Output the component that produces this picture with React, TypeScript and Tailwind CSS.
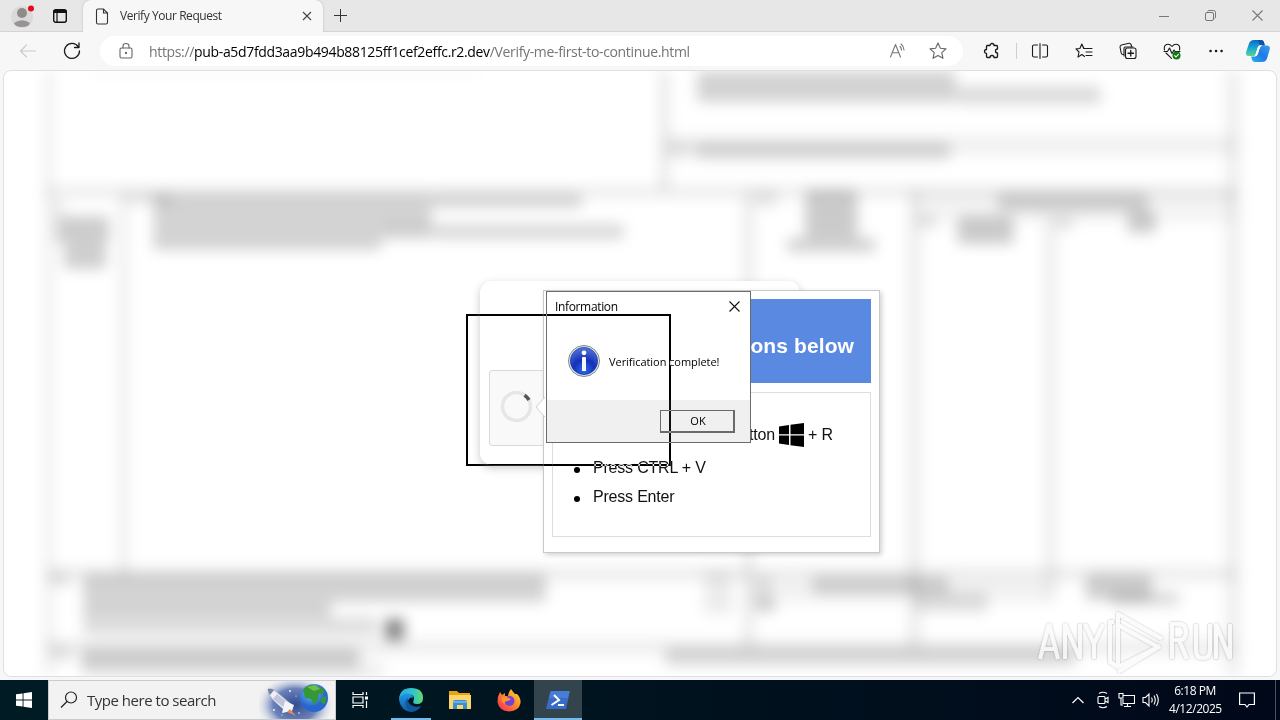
import React from "react";

type Box = [number, number, number, number, number];

const rules: Box[] = [
  [46, 60, 8, 620, 0.07],
  [660, 60, 9, 130, 0.1],
  [46, 186, 1190, 12, 0.07],
  [665, 136, 570, 18, 0.06],
  [121, 190, 7, 385, 0.09],
  [743, 190, 11, 460, 0.08],
  [908, 190, 12, 460, 0.08],
  [1044, 215, 12, 385, 0.07],
  [1226, 60, 12, 620, 0.08],
  [915, 190, 320, 32, 0.045],
  [46, 567, 1190, 14, 0.07],
  [748, 580, 300, 22, 0.05],
  [46, 640, 1190, 14, 0.07],
];

const inkBlots: Box[] = [
  [90, 64, 390, 9, 0.09],
  [697, 70, 258, 32, 0.21],
  [955, 86, 145, 18, 0.17],
  [695, 142, 255, 17, 0.18],
  [668, 140, 22, 18, 0.1],
  [128, 193, 45, 11, 0.12],
  [154, 194, 278, 32, 0.21],
  [432, 194, 150, 14, 0.19],
  [154, 226, 228, 24, 0.21],
  [382, 224, 50, 15, 0.21],
  [432, 224, 192, 15, 0.18],
  [52, 200, 14, 16, 0.08],
  [57, 216, 53, 27, 0.24],
  [65, 243, 42, 26, 0.23],
  [755, 190, 22, 17, 0.11],
  [805, 190, 52, 48, 0.25],
  [787, 238, 88, 14, 0.22],
  [997, 193, 150, 18, 0.2],
  [918, 214, 18, 15, 0.12],
  [957, 216, 56, 28, 0.25],
  [1055, 216, 18, 13, 0.14],
  [1127, 211, 28, 22, 0.24],
  [52, 572, 18, 14, 0.12],
  [84, 574, 462, 28, 0.21],
  [84, 602, 248, 15, 0.21],
  [84, 617, 294, 18, 0.16],
  [52, 646, 20, 15, 0.12],
  [82, 648, 278, 20, 0.22],
  [82, 664, 302, 12, 0.1],
  [704, 570, 28, 44, 0.09],
  [757, 575, 14, 22, 0.12],
  [755, 597, 20, 15, 0.22],
  [812, 576, 136, 18, 0.19],
  [915, 592, 72, 20, 0.15],
  [1085, 574, 66, 26, 0.23],
  [1110, 592, 68, 13, 0.18],
  [665, 648, 410, 17, 0.19],
];

function BlurredForm() {
  return (
    <svg className="block h-full w-full blur-[7px]" viewBox="5 71 1270 605" preserveAspectRatio="none">
      {rules.map(([x, y, w, h, o], i) => (
        <rect key={i} x={x} y={y} width={w} height={h} fill="#000" opacity={o} />
      ))}
      {inkBlots.map(([x, y, w, h, o], i) => (
        <rect key={i} x={x} y={y} width={w} height={h} rx="4" fill="#000" opacity={o * 0.82} />
      ))}
      <rect x="386" y="619" width="18" height="21" fill="#000" opacity="0.5" />
    </svg>
  );
}

function Ico({ children, w = 20, className = "" }: { children: React.ReactNode; w?: number; className?: string }) {
  return (
    <svg width={w} height={w} viewBox="0 0 20 20" fill="none" stroke="currentColor" strokeWidth="1.1" strokeLinejoin="round" strokeLinecap="round" className={"block shrink-0 " + className}>
      {children}
    </svg>
  );
}

function TabStrip() {
  return (
    <div className="flex h-8 items-stretch border-b border-[#d4d4d4] bg-[#e7e7e7]">
      <div className="flex w-[83px] items-center pl-2.5">
        <svg width="26" height="26" viewBox="0 0 26 26" className="block">
          <circle cx="12" cy="14" r="11" fill="#dadada" />
          <circle cx="12" cy="10" r="5" fill="#8e8b89" />
          <path d="M4 20 Q12 14.500 20 20 Q19 24 12 24 Q5 24 4 20Z" fill="#979493" />
          <circle cx="21" cy="5.500" r="3" fill="#e00b1c" />
        </svg>
        <svg width="16" height="16" viewBox="0 0 16 16" fill="none" stroke="#111" className="ml-4 block">
          <rect x="1.700" y="1.700" width="12.600" height="12.600" rx="2" strokeWidth="1.400" />
          <path d="M1.700 3.500H14.300" strokeWidth="3" />
          <path d="M5 4V14" strokeWidth="1.200" />
        </svg>
      </div>
      <div className="-mb-px flex w-60 items-center rounded-t-lg bg-[#f7f7f7] pl-3 shadow-[0_0_2px_rgba(0,0,0,0.25)] [clip-path:inset(-3px_-3px_0_-3px)]">
        <svg width="14" height="17" viewBox="0 0 14 17" fill="none" stroke="#333" strokeWidth="1.100" className="block">
          <path d="M3 1H8.500L12.500 5V14.500Q12.500 16 11 16H3Q1.500 16 1.500 14.500V2.500Q1.500 1 3 1Z" />
          <path d="M8.500 1V5H12.500" />
        </svg>
        <span className="ml-[11px] w-[182px] whitespace-nowrap text-[12px] tracking-[-0.43px] text-[#333]">Verify Your Request</span>
        <svg width="10" height="10" viewBox="0 0 10 10" stroke="#444" strokeWidth="1.100" className="block"><path d="M1 1L9 9M9 1L1 9" /></svg>
      </div>
      <div className="flex flex-1 items-center pl-[11px]">
        <svg width="14" height="14" viewBox="0 0 14 14" stroke="#333" className="block"><path d="M6.500 0V13M0 6.500H13" /></svg>
      </div>
      <div className="flex items-center gap-[36px] pr-[17px] text-[#777]">
        <svg width="10" height="10" viewBox="0 0 10 10" stroke="currentColor" className="block"><path d="M0 5.500H10" /></svg>
        <svg width="11" height="11" viewBox="0 0 11 11" fill="none" stroke="currentColor" className="block"><rect x=".5" y="2.500" width="8" height="8" rx="1.500" /><path d="M2.500 1.500Q3 .5 4 .5H8.500Q10.500 .5 10.500 2.500V7Q10.500 8 9.500 8.500" /></svg>
        <svg width="11" height="11" viewBox="0 0 11 11" stroke="currentColor" strokeWidth="1.100" className="block"><path d="M.5 .5L10.500 10.500M10.500 .5L.5 10.500" /></svg>
      </div>
    </div>
  );
}

function Copilot() {
  return (
    <svg width="26" height="24" viewBox="0 0 26 24" className="block">
      <defs>
        <linearGradient id="cpA" x1="0" y1="0" x2="0" y2="1"><stop offset="0" stopColor="#0c6cc4" /><stop offset=".5" stopColor="#18a6d8" /><stop offset="1" stopColor="#59d68d" /></linearGradient>
        <linearGradient id="cpB" x1="1" y1="0" x2="0" y2="1"><stop offset="0" stopColor="#3aa2ee" /><stop offset=".5" stopColor="#2277e6" /><stop offset="1" stopColor="#1fb4f0" /></linearGradient>
      </defs>
      <path d="M9 1H16Q18.500 1 19.200 4L19.800 6H16Q13.500 6 12.700 8.500L10.500 15.500Q9.800 17 8 17H4Q0 17 1.300 12.500L4 4.500Q5.200 1 9 1Z" fill="url(#cpA)" />
      <path d="M17 23H10Q7.500 23 6.800 20L6.200 17.500H9Q12 17.500 13 14.500L15 8.500Q15.700 6.500 17.500 6.500H21.500Q26 6.500 24.600 11L22 19.500Q20.800 23 17 23Z" fill="url(#cpB)" />
      <path d="M12.500 1H16Q18.500 1 19.200 4L19.800 6.500H17Q14.500 6.500 13.700 3.500Z" fill="#1251a4" />
      <path d="M15 6.500H17.500Q15.500 7 14.500 9.500L12.700 15Q11.800 17.500 9 17.500Q10.200 17 10.700 15.300L12.700 8.700Q13.300 6.600 15 6.500Z" fill="#fff" />
    </svg>
  );
}

function Toolbar() {
  return (
    <div className="flex h-[38px] items-center bg-[#f7f7f7] text-[#1a1a1a]">
      <div className="flex w-[100px] items-center pl-[18px]">
        <Ico className="text-[#c9c9c9]"><path d="M2.500 10H17.500M8.500 4L2.500 10L8.500 16" /></Ico>
        <Ico className="ml-6"><path d="M16.200 5.700A7.500 7.500 0 1 0 17.500 10M17 2V6.500H12.500" strokeWidth="1.300" /></Ico>
      </div>
      <div className="flex h-[30px] w-[863px] items-center rounded-full bg-white pl-4">
        <Ico className="text-[#666]"><rect x="4" y="7" width="12" height="10" rx="1.500" /><path d="M7 7V5Q7 2.500 10 2.500Q13 2.500 13 5V7" /><circle cx="10" cy="12" r=".6" fill="currentColor" /></Ico>
        <span className="ml-[13px] flex-1 whitespace-nowrap text-[14px] tracking-[-0.34px] text-[#757575]">
          https://<span className="text-black">pub-a5d7fdd3aa9b494b88125ff1cef2effc.r2.dev</span>/Verify-me-first-to-continue.html
        </span>
        <Ico className="text-[#777]"><path d="M2.500 16L7.500 3.500L12.500 16M4.200 11.700H10.800M12 5.500Q13.500 7 13.500 9M13 3Q16 5.500 16 9" /></Ico>
        <Ico className="ml-5 mr-[15px] text-[#666]"><path d="M10 2L12.400 7.300L18 7.900L13.800 11.700L15 17.300L10 14.400L5 17.300L6.200 11.700L2 7.900L7.600 7.300Z" /></Ico>
      </div>
      <div className="flex flex-1 items-center pl-[19px]">
        <Ico><path d="M5 4.500H8A2 2 0 1 1 12 4.500H14.500Q15.500 4.500 15.500 5.500V8A2 2 0 1 0 15.500 12V15.500Q15.500 16.500 14.500 16.500H12A2 2 0 0 0 8 16.500H5.500Q4.500 16.500 4.500 15.500V12.500A2 2 0 1 1 4.500 8.500V5.500Q4.500 4.500 5.500 4.500" strokeWidth="1.300" /></Ico>
        <div className="ml-3.5 h-4 w-px bg-[#cfcfcf]" />
        <Ico className="ml-[13px]"><path d="M7.500 4H4Q2.500 4 2.500 5.500V14.500Q2.500 16 4 16H7.500M12.500 4H16Q17.500 4 17.500 5.500V14.500Q17.500 16 16 16H12.500M10 2.500V17.500" /></Ico>
        <Ico className="ml-6"><path d="M11.500 7.500H9.700L7.800 3L5.900 7.500L2 7.900L5 11L4 16L8 13.500L10.500 15.500M12 7.500H18M12 11H18M12 14.500H18M7.800 3L10 7.500" /></Ico>
        <Ico className="ml-6"><path d="M5 13.500Q3.500 13.500 3.200 12L2 6Q2 4.500 3.500 4L11 2.300Q12.500 2.200 13 3.500L13.500 5M6 15V7.500Q6 6 7.500 6H15" /><rect x="7.500" y="7" width="10.500" height="10.500" rx="2" /><path d="M12.750 9.500V15M10 12.250H15.500" strokeWidth="1.300" /></Ico>
        <Ico className="ml-6"><path d="M2.500 9Q1.500 5 4.500 3.500Q7.500 2.500 10 5.500Q12.500 2.500 15.500 3.500Q18.500 5 17.500 9M4 12L9.500 17.300M2 10.500H5.500L7.500 7L10 12.500L12 9L13 10.500H18" /><circle cx="14.500" cy="14.500" r="4" fill="#107c10" stroke="none" /><path d="M12.700 14.700L14 16L16.400 13.300" stroke="#fff" /></Ico>
        <Ico className="ml-6"><path d="M4.500 10H4.600M10 10H10.100M15.500 10H15.600" strokeWidth="2.500" /></Ico>
        <div className="ml-[19px]"><Copilot /></div>
      </div>
    </div>
  );
}

function SpinnerCard() {
  return (
    <div className="absolute left-[480px] top-[281px] h-[184px] w-[320px] rounded-xl bg-white shadow-[0_3px_8px_rgba(0,0,0,0.22)]">
      <div className="ml-[9px] mt-[89px] flex h-[76px] w-[302px] items-center rounded-[3px] border border-[#d9d9d9] bg-[#f9f9f9] pl-[10px]">
        <svg width="34" height="34" viewBox="0 0 34 34" fill="none" className="block">
          <circle cx="16.500" cy="15.500" r="14" stroke="#e6e6e6" strokeWidth="3.500" />
          <path d="M24.500 4.300A14 14 0 0 1 29 9" stroke="#555" strokeWidth="3.500" />
        </svg>
      </div>
    </div>
  );
}

function Instructions() {
  return (
    <div className="absolute left-[543px] top-[290px] flex h-[263px] w-[337px] flex-col gap-[9px] border border-[#c9c9c9] bg-white p-2 font-['Liberation_Sans',sans-serif] shadow-[2px_2px_5px_rgba(0,0,0,0.18)]">
      <div className="flex h-[84px] shrink-0 items-center justify-end bg-[#5989e1] pr-[17px] pt-[10px]">
        <h2 className="whitespace-nowrap text-[21px] font-bold tracking-[0.1px] text-white">ons below</h2>
      </div>
      <div className="h-[145px] border border-[#dedede] pl-[21px] pt-[25px] text-[16px] tracking-[-0.2px] text-[#111]">
        <div className="flex h-[33px] items-center whitespace-nowrap pl-5">
          <span className="w-[181px] text-right">tton</span>
          <svg width="25" height="24" viewBox="0 0 25 24" className="mx-1 block" fill="#000">
            <path d="M0 3.500L10 2V11.200H0ZM11.500 1.800L25 0V11.200H11.500ZM0 12.600H10V22L0 20.500ZM11.500 12.600H25V24L11.500 22.200Z" />
          </svg>
          <span>+ R</span>
        </div>
        <div className="flex h-[33px] items-center"><i className="mr-[13px] mt-1 h-[6px] w-[6px] rounded-full bg-black" />Press CTRL + V</div>
        <div className="flex h-[25px] items-center"><i className="mr-[13px] mt-1 h-[6px] w-[6px] rounded-full bg-black" />Press Enter</div>
      </div>
      <svg width="10" height="20" viewBox="0 0 10 20" className="absolute -left-[9px] top-[106px]">
        <path d="M10 0L1 10L10 20" fill="#fff" stroke="#cfcfcf" />
      </svg>
    </div>
  );
}

function Dialog() {
  return (
    <div className="absolute left-[546px] top-[291px] flex h-[152px] w-[205px] flex-col border border-[#6b6b6b] bg-white text-[11px] text-black">
      <div className="flex h-[30px] items-center justify-between pl-2 pr-[10px]">
        <span className="text-[12px] tracking-[-0.35px]">Information</span>
        <svg width="11" height="11" viewBox="0 0 11 11" stroke="#111" strokeWidth="1.100" className="mb-0.5 block"><path d="M.5 .5L10.500 10.500M10.500 .5L.5 10.500" /></svg>
      </div>
      <div className="flex h-[78px] items-center pl-[21px]">
        <svg width="32" height="32" viewBox="0 0 32 32" className="block">
          <defs>
            <radialGradient id="info" cx=".5" cy=".85" r=".9"><stop offset="0" stopColor="#2d6be8" /><stop offset=".45" stopColor="#1430b8" /><stop offset="1" stopColor="#5a7fdd" /></radialGradient>
          </defs>
          <circle cx="16" cy="16" r="15.500" fill="#dde4e8" stroke="#7f898f" />
          <circle cx="16" cy="16" r="13.600" fill="url(#info)" stroke="#12309c" strokeWidth=".7" />
          <circle cx="16" cy="7.800" r="2.400" fill="#fff" />
          <rect x="14" y="12" width="4" height="14" rx=".6" fill="#f4f6fb" />
        </svg>
        <span className="ml-[9px] mt-0.5 whitespace-nowrap tracking-[-0.05px]">Verification complete!</span>
      </div>
      <div className="flex flex-1 items-center justify-end bg-[#f0f0f0] pr-[15px]">
        <div className="flex h-[23px] w-[75px] items-center justify-center border-b-2 border-l border-r-2 border-t border-[#6a6a6a] bg-[#f0f0f0] pl-0.5 pt-0.5">OK</div>
      </div>
    </div>
  );
}

function Watermark() {
  return (
    <svg width="204" height="70" viewBox="0 0 204 70" className="absolute left-[1034px] top-[606px]">
      <defs>
        <filter id="wm" x="-10%" y="-10%" width="120%" height="120%"><feDropShadow dx="0" dy="0" stdDeviation="1.300" floodColor="#000" floodOpacity=".38" /></filter>
      </defs>
      <g filter="url(#wm)" fill="none" stroke="#fbfbfb" strokeWidth="4" opacity=".8">
        <path d="M6 53L15 18L24 53M9 43H21M31 53V18L46 53V18M51 18L60 38L69 18M60 37V53" />
        <path d="M138 53V18H145Q152 18 152 26Q152 34 145 34H138M145 34L153 53M162 18V44Q162 52 169 52Q176 52 176 44V18M182 53V18L196 53V18" />
        <path d="M84 36V8L128 33" strokeLinejoin="round" />
        <path d="M84 19L124 41L84 61V36" strokeLinejoin="round" />
        <path d="M80 16H76V56L84 61M84 66L126 40" strokeLinejoin="round" />
      </g>
    </svg>
  );
}

function SpaceArt() {
  return (
    <svg width="76" height="38" viewBox="0 0 76 38" className="block">
      <defs>
        <radialGradient id="sky"><stop offset="0" stopColor="#304c91" /><stop offset=".55" stopColor="#6c82b9" /><stop offset="1" stopColor="#f2f2f2" stopOpacity="0" /></radialGradient>
        <radialGradient id="sea" cx=".4" cy=".3"><stop offset="0" stopColor="#72c5fa" /><stop offset="1" stopColor="#2866cd" /></radialGradient>
      </defs>
      <ellipse cx="36" cy="24" rx="40" ry="30" fill="url(#sky)" />
      <circle cx="55" cy="17" r="14" fill="url(#sea)" />
      <path d="M44 9Q49 2 58 5L66 9L63 14L60 12L59 19L55 24L52 18L46 17ZM62 17L68 15L66 23L62 22Z" fill="#359838" />
      <path d="M48 6L56 4L61 8L55 10Z" fill="#71bd48" />
      <path d="M9 8Q14 7 19 12L32 23L30 29L26 30L14 19Q9 14 9 8Z" fill="#eef0f6" stroke="#8590b1" strokeWidth=".6" />
      <path d="M18 13L14 18L28 29L31 23Z" fill="#bfc6dc" />
      <path d="M9 8Q12 7 15 9L11 14Q9 11 9 8Z" fill="#7783a5" />
      <path d="M26 20L35 24L33 30L23 32Z" fill="#f4f4fb" />
      <path d="M31 28L37 35L28 31Z" fill="#e78661" />
      <g fill="#fff"><circle cx="31" cy="10" r=".9" /><circle cx="15" cy="29" r=".9" /><circle cx="40" cy="32" r=".8" /><circle cx="37" cy="15" r=".6" /><circle cx="23" cy="34" r=".6" /></g>
    </svg>
  );
}

function Taskbar() {
  return (
    <div className="flex h-10 bg-gradient-to-r from-[#001b23] via-[#00131f] to-[#010819] text-white">
      <div className="flex w-12 items-center justify-center">
        <svg width="16" height="16" viewBox="0 0 16 16" fill="#fff" className="block"><path d="M0 2.300L6.600 1.400V7.500H0ZM7.500 1.200L16 0V7.500H7.500ZM0 8.400H6.600V14.600L0 13.700ZM7.500 8.400H16V16L7.500 14.800Z" /></svg>
      </div>
      <div className="flex w-72 items-center border border-[#c9cccd] bg-[#f2f2f2] pl-[11px] text-[#333]">
        <svg width="18" height="18" viewBox="0 0 18 18" fill="none" stroke="#222" strokeWidth="1.200" className="block"><circle cx="11" cy="6.500" r="5.500" /><path d="M7 10.500L1 16.500" /></svg>
        <span className="ml-[9px] mt-px flex-1 whitespace-nowrap text-[15px] tracking-[-0.48px]">Type here to search</span>
        <SpaceArt />
      </div>
      <div className="flex w-12 items-center justify-center">
        <svg width="17" height="16" viewBox="0 0 17 16" fill="none" stroke="#fff" strokeWidth="1.200" className="block"><path d="M1 0V2.500H11V0M1 16V13.500H11V16M1 5H11V11H1ZM14.500 0V3M14.500 9V16" /><path d="M13 6H16" strokeWidth="3" /></svg>
      </div>
      <div className="flex w-[54px] justify-center">
        <div className="flex w-10 items-center justify-center border-b-2 border-[#76b9ed] pt-0.5">
          <svg width="26" height="26" viewBox="0 0 26 26" className="block">
            <defs>
              <linearGradient id="edA" x1="0" x2="1"><stop offset="0" stopColor="#2aa8e8" /><stop offset=".6" stopColor="#32c6c8" /><stop offset="1" stopColor="#65dc68" /></linearGradient>
              <linearGradient id="edB" x1="0" y1="0" x2="0" y2="1"><stop offset="0" stopColor="#209be5" /><stop offset="1" stopColor="#0c59a4" /></linearGradient>
            </defs>
            <path d="M1 13Q1 6 8 6Q15 6 15 11Q12 9 10 14Q9 22 22 20Q18 25 13 25Q3 24 1 13Z" fill="url(#edB)" />
            <path d="M1 12Q2 1 13 1Q25 1 25 11Q25 17 19 17Q14 17 15.500 14Q18 7 9 6.500Q3 7 1 12Z" fill="url(#edA)" />
            <path d="M10 11Q6 14 8 19Q11 25 17 24Q21 23 23 19Q17 21 13 18Q9 15 10 11Z" fill="#15539b" />
          </svg>
        </div>
      </div>
      <div className="flex w-11 items-center justify-center">
        <svg width="22" height="20" viewBox="0 0 22 20" className="block"><path d="M0 1H8L10 3H21V6H0Z" fill="#e8a317" /><path d="M0 5H22V19H0Z" fill="#fbd769" /><path d="M4 19V12Q4 10 6 10H16Q18 10 18 12V19H14V15H8V19Z" fill="#3b8fd0" /><path d="M4 12H18" stroke="#75bdec" strokeWidth="1.500" /></svg>
      </div>
      <div className="flex w-[52px] items-center justify-center pl-0.5">
        <svg width="24" height="24" viewBox="0 0 24 24" className="block">
          <defs><linearGradient id="fx" x1="1" y1="0" x2="0" y2="1"><stop offset="0" stopColor="#ffe23d" /><stop offset=".45" stopColor="#ff8a28" /><stop offset="1" stopColor="#f4235f" /></linearGradient></defs>
          <path d="M3 4L5 7L8 5V8L11 8Q12 3 14 1Q16 4 18 6L20 6Q24 10 23.500 15Q22 23 12 23.500Q2 23 .5 14Q.5 8 3 4Z" fill="url(#fx)" />
          <circle cx="12.500" cy="13" r="5" fill="#7342d6" />
          <path d="M5 9Q9 8 14 11Q12 13 10 13Q7 13 8 16Q3 14 5 9Z" fill="#ff9528" />
        </svg>
      </div>
      <div className="flex w-12 items-center justify-center border-b-2 border-[#76b9ed] bg-[#33444d] pt-0.5">
        <svg width="24" height="18" viewBox="0 0 24 18" className="block"><path d="M4.500 0H24L20 18H0Z" fill="#386bc8" /><path d="M5 0H23.500L22 7H3Z" fill="#5389dd" opacity=".6" /><path d="M8 4L13 9L5.500 14M12 14H18" fill="none" stroke="#fff" strokeWidth="2" /></svg>
      </div>
      <div className="flex flex-1 items-center justify-end">
        <svg width="12" height="8" viewBox="0 0 12 8" fill="none" stroke="#fff" strokeWidth="1.200" className="mr-3 block"><path d="M.5 7L6 1.500L11.500 7" /></svg>
        <svg width="14" height="18" viewBox="0 0 14 18" fill="none" stroke="#fff" strokeWidth="1.100" className="mr-2 block"><rect x="2" y="5.500" width="7" height="7" rx="1" /><path d="M9 8L12 6.500V11.500L9 10M3 2.500Q7 0 11 2.500M3 15.500Q7 18 11 15.500" /></svg>
        <svg width="17" height="16" viewBox="0 0 17 16" fill="none" stroke="#fff" strokeWidth="1.100" className="mr-[7px] block"><path d="M5 3.500H16.500V11.500H5V7M9.500 11.500V14.500M6 14.500H13M1 1.500H5V6H1ZM3 6V13H5" /></svg>
        <svg width="18" height="16" viewBox="0 0 18 16" fill="none" stroke="#fff" strokeWidth="1.100" className="mr-[9px] block"><path d="M1 5.500H3.500L7 2V14L3.500 10.500H1ZM9.500 5.500Q11 8 9.500 10.500M12 3.500Q14.500 8 12 12.500M14.500 2Q18 8 14.500 14" /></svg>
        <div className="w-[52px] whitespace-nowrap text-center text-[12px] leading-[18px] tracking-[-0.45px]"><div>6:18 PM</div><div>4/12/2025</div></div>
        <svg width="16" height="16" viewBox="0 0 16 16" fill="none" stroke="#fff" strokeWidth="1.200" className="ml-[18px] mr-5 block"><path d="M.6 1H15.400V12.500H10L8 15L6 12.500H.6Z" /></svg>
        <div className="mr-1 h-10 w-px bg-[#4a5261]" />
      </div>
    </div>
  );
}

export default function App() {
  return (
    <div className="relative isolate flex h-[720px] w-[1280px] flex-col overflow-hidden bg-[#f7f7f7] font-['Open_Sans','Noto_Sans',sans-serif]">
      <TabStrip />
      <Toolbar />
      <div className="h-[610px] bg-[#f5f7f9] px-[3px] pb-[3px]">
        <div className="h-full overflow-hidden rounded-lg border border-[#dfdfdf] bg-white">
          <BlurredForm />
        </div>
      </div>
      <Taskbar />
      <SpinnerCard />
      <Instructions />
      <Dialog />
      <div className="pointer-events-none absolute left-[466px] top-[314px] h-[152px] w-[205px] border-2 border-white mix-blend-difference" />
      <Watermark />
    </div>
  );
}
